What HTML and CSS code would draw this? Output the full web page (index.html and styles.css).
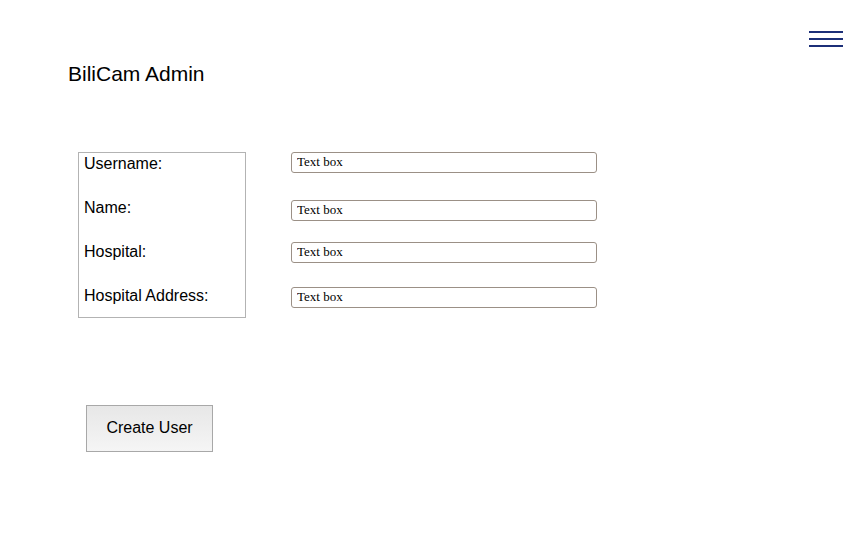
FILE: index.html
```html
<!DOCTYPE html>
<html lang="en">
<head>
<meta charset="utf-8">
<title>BiliCam Admin</title>
<link rel="stylesheet" href="styles.css">
</head>
<body>
<header class="topbar">
  <button class="menu-btn" aria-label="Menu">
    <span class="bar"></span>
    <span class="bar"></span>
    <span class="bar"></span>
  </button>
</header>
<h1 class="title">BiliCam Admin</h1>
<form class="user-form">
  <div class="labels">
    <label class="label">Username:</label>
    <label class="label">Name:</label>
    <label class="label">Hospital:</label>
    <label class="label">Hospital Address:</label>
  </div>
  <div class="fields">
    <input class="field" type="text" value="Text box">
    <input class="field field-2" type="text" value="Text box">
    <input class="field field-3" type="text" value="Text box">
    <input class="field field-4" type="text" value="Text box">
  </div>
</form>
<div class="actions">
  <button class="create-btn" type="button">Create User</button>
</div>
</body>
</html>
```
FILE: styles.css
```css
html, body {
  margin: 0;
  padding: 0;
  background: #ffffff;
}
body {
  font-family: "Liberation Sans", Arial, sans-serif;
  color: #000;
  width: 868px;
  height: 550px;
  overflow: hidden;
}
.topbar {
  display: flex;
  justify-content: flex-end;
  padding: 31px 25px 0 0;
}
.menu-btn {
  display: flex;
  flex-direction: column;
  gap: 5px;
  width: 34px;
  padding: 0;
  margin: 0;
  border: 0;
  background: transparent;
}
.bar {
  display: block;
  width: 34px;
  height: 2px;
  background: #1c2f78;
}
.title {
  margin: 15px 0 0 68px;
  font-size: 21px;
  font-weight: normal;
  line-height: 24px;
}
.user-form {
  display: flex;
  align-items: flex-start;
  gap: 45px;
  margin: 66px 0 0 78px;
}
.labels {
  box-sizing: border-box;
  width: 168px;
  height: 166px;
  border: 1px solid #b3b3b3;
  padding: 2px 5px 0 5px;
  display: flex;
  flex-direction: column;
  gap: 26px;
}
.label {
  font-size: 16px;
  line-height: 18px;
  white-space: nowrap;
}
.fields {
  display: flex;
  flex-direction: column;
}
.field {
  box-sizing: border-box;
  width: 306px;
  height: 21px;
  margin: 0;
  padding: 0 5px 1px 5px;
  border: 1px solid #9b9086;
  border-radius: 3px;
  font-family: "Liberation Serif", "Times New Roman", serif;
  font-size: 13px;
  color: #000;
  background: #fff;
}
.field-2 { margin-top: 27px; }
.field-3 { margin-top: 21px; }
.field-4 { margin-top: 24px; }
.actions {
  margin: 87px 0 0 86px;
}
.create-btn {
  box-sizing: border-box;
  width: 127px;
  height: 47px;
  border: 1px solid #a8a8a8;
  background: linear-gradient(#e7e7e7, #f5f5f5);
  font-family: "Liberation Sans", Arial, sans-serif;
  font-size: 16px;
  color: #000;
  padding: 0 0 2px 0;
  margin: 0;
}
```
